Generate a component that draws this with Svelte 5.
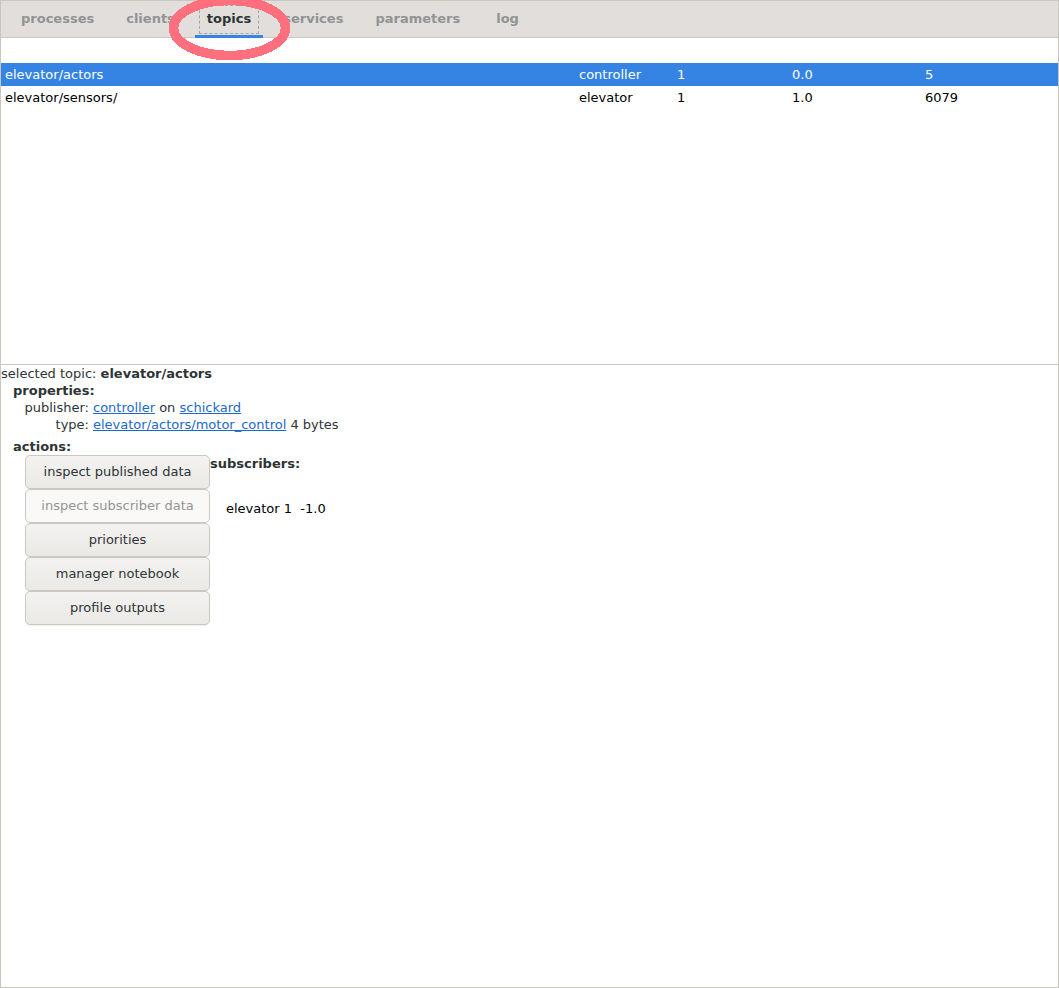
<script lang="ts">
	const tabs = ['processes', 'clients', 'topics', 'services', 'parameters', 'log'];
	const activeTab = 'topics';

	const rows = [
		{ name: 'elevator/actors', node: 'controller', count: '1', rate: '0.0', size: '5', selected: true },
		{ name: 'elevator/sensors/', node: 'elevator', count: '1', rate: '1.0', size: '6079', selected: false }
	];

	const actions = [
		{ label: 'inspect published data', disabled: false },
		{ label: 'inspect subscriber data', disabled: true },
		{ label: 'priorities', disabled: false },
		{ label: 'manager notebook', disabled: false },
		{ label: 'profile outputs', disabled: false }
	];
</script>

<div class="window">
	<div class="tabbar">
		{#each tabs as tab}
			<div class="tab" class:active={tab === activeTab}>
				<span class="tab-label">{tab}</span>
			</div>
		{/each}
	</div>

	<div class="list">
		{#each rows as row}
			<div class="row" class:selected={row.selected}>
				<span>{row.name}</span>
				<span>{row.node}</span>
				<span>{row.count}</span>
				<span>{row.rate}</span>
				<span>{row.size}</span>
			</div>
		{/each}
	</div>

	<div class="details">
		<div class="line">selected topic: <b>elevator/actors</b></div>
		<div class="line heading">properties:</div>
		<div class="prop">
			<span class="key">publisher:</span>
			<span><a href="#controller">controller</a> on <a href="#schickard">schickard</a></span>
			<span class="key">type:</span>
			<span><a href="#motor_control">elevator/actors/motor_control</a> 4 bytes</span>
		</div>
		<div class="line heading actions-heading">actions:</div>
		<div class="actions">
			<div class="buttons">
				{#each actions as action}
					<button disabled={action.disabled}>{action.label}</button>
				{/each}
			</div>
			<div class="subscribers">
				<div class="sub-title">subscribers:</div>
				<div class="sub-row">elevator 1&nbsp;&nbsp;-1.0</div>
			</div>
		</div>
	</div>

	<svg class="annotation" width="140" height="70" viewBox="0 0 140 70">
		<ellipse cx="70.5" cy="28" rx="56" ry="27.5" fill="none" stroke="#ff6f7d" stroke-width="9.5" shape-rendering="crispEdges" />
	</svg>
</div>

<style>
	:global(body) {
		margin: 0;
		background: #fff;
	}

	.window {
		position: relative;
		box-sizing: border-box;
		width: 1059px;
		height: 988px;
		display: flex;
		flex-direction: column;
		overflow: hidden;
		border: 1px solid #c9c5bf;
		border-top: 0;
		font-family: 'DejaVu Sans', sans-serif;
		font-size: 13px;
		color: #2e3436;
	}

	.tabbar {
		box-sizing: border-box;
		flex: none;
		height: 38px;
		display: flex;
		padding-left: 4px;
		background: #e1dedb;
		border-top: 1px solid #cdc7c2;
		border-bottom: 1px solid #cdc7c2;
	}

	.tab {
		box-sizing: border-box;
		margin: 0 4px;
		padding: 4px 4px 0;
		height: 36px;
		font-weight: 700;
		color: #919494;
		border-bottom: 2px solid transparent;
	}

	.tab:last-child {
		margin-left: 8px;
	}

	.tab-label {
		box-sizing: border-box;
		display: block;
		height: 29px;
		padding: 5px 7px 0;
		border: 1px solid transparent;
	}

	.tab.active {
		height: 37px;
		color: #2e3436;
		border-bottom: 3px solid #3584e4;
	}

	.tab.active .tab-label {
		border: 1px dashed #a5a5a3;
	}

	.list {
		box-sizing: border-box;
		flex: none;
		height: 327px;
		padding-top: 25px;
		border-bottom: 1px solid #cdc7c2;
	}

	.row {
		display: grid;
		grid-template-columns: 574px 98px 115px 133px 1fr;
		height: 23px;
		line-height: 23px;
		padding-left: 4px;
		color: #000;
	}

	.row.selected {
		background: #3584e4;
		color: #fff;
	}

	.details {
		flex: 1;
	}

	.line {
		height: 17px;
		line-height: 17px;
	}

	.heading {
		padding-left: 12px;
		font-weight: 700;
	}

	.prop {
		display: grid;
		grid-template-columns: 88px auto;
		justify-content: start;
		column-gap: 4px;
		line-height: 17px;
		padding-bottom: 5px;
	}

	.key {
		text-align: right;
	}

	a {
		color: #1b6acb;
	}

	.actions-heading {
		height: 17px;
	}

	.actions {
		display: flex;
		align-items: flex-start;
		padding-left: 24px;
	}

	.buttons {
		display: flex;
		flex-direction: column;
		width: 185px;
	}

	button {
		box-sizing: border-box;
		height: 34px;
		padding: 0 0 2px;
		font: inherit;
		color: #2e3436;
		background: linear-gradient(#f4f2f0, #ebe9e6);
		border: 1px solid #cdc7c2;
		border-radius: 5px;
		box-shadow: 0 1px 1px rgba(0, 0, 0, 0.07);
	}

	button:disabled {
		color: #929595;
		background: #faf9f8;
		box-shadow: none;
	}

	.sub-title {
		font-weight: 700;
		line-height: 17px;
	}

	.sub-row {
		margin: 28px 0 0 16px;
		line-height: 17px;
		color: #000;
	}

	.annotation {
		position: absolute;
		left: 158px;
		top: 0;
		pointer-events: none;
	}
</style>
